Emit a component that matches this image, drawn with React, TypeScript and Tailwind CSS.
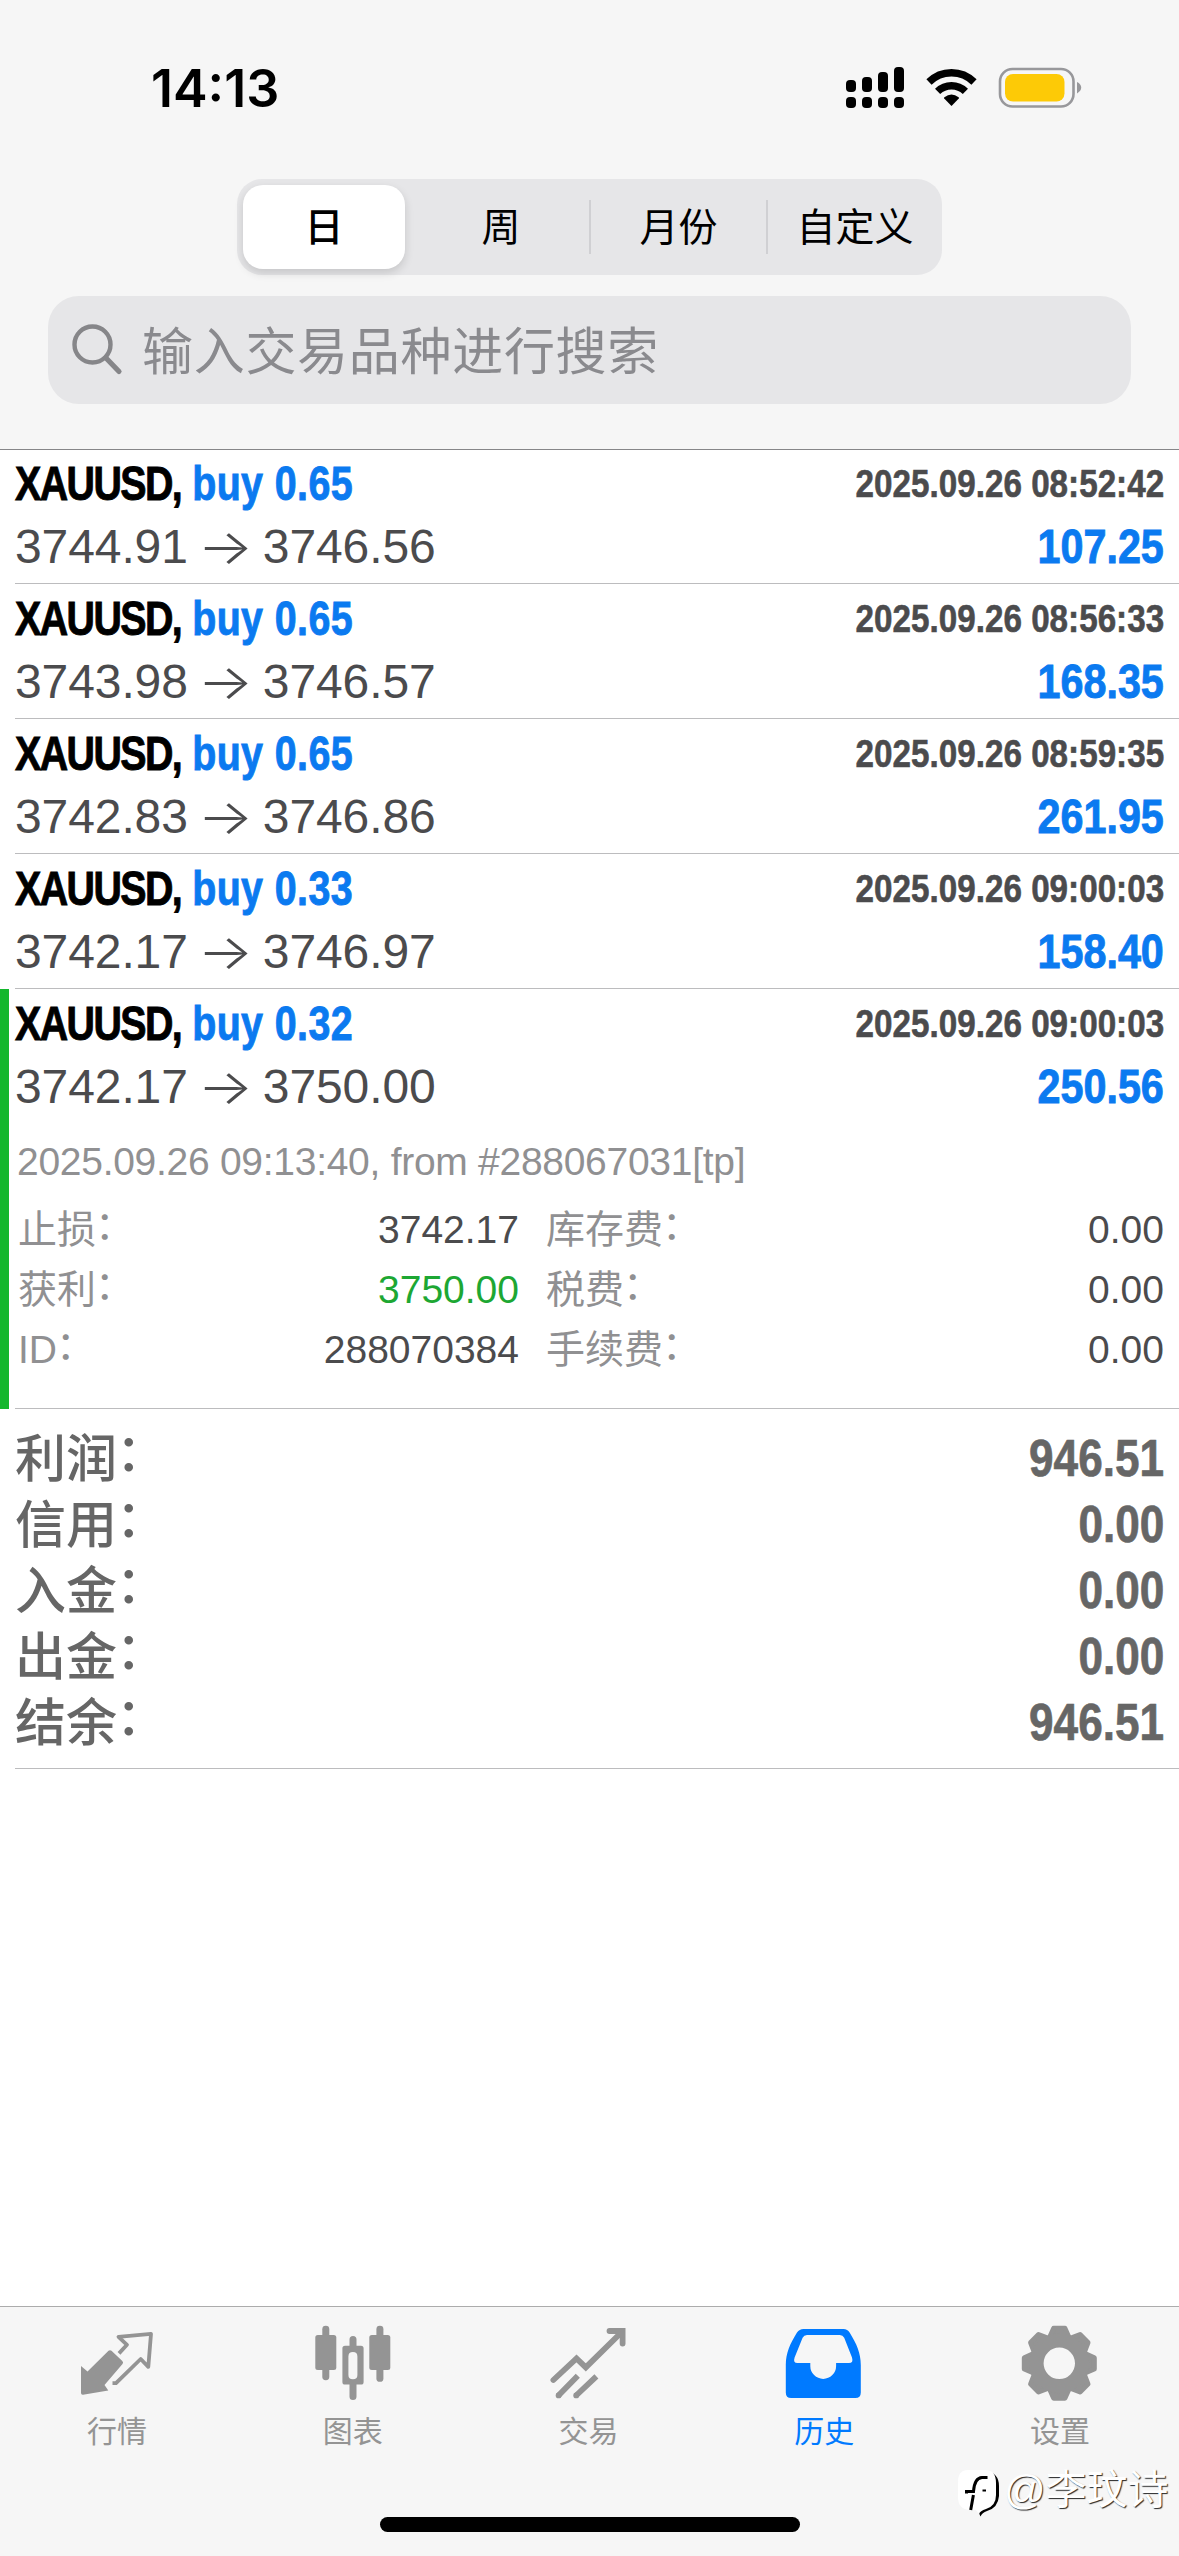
import type { ReactNode } from 'react';
import clsx from 'clsx';

type Deal = {
	symbol: string;
	volume: string;
	open: string;
	close: string;
	time: string;
	profit: string;
};

const deals: Deal[] = [
	{ symbol: 'XAUUSD', volume: '0.65', open: '3744.91', close: '3746.56', time: '2025.09.26 08:52:42', profit: '107.25' },
	{ symbol: 'XAUUSD', volume: '0.65', open: '3743.98', close: '3746.57', time: '2025.09.26 08:56:33', profit: '168.35' },
	{ symbol: 'XAUUSD', volume: '0.65', open: '3742.83', close: '3746.86', time: '2025.09.26 08:59:35', profit: '261.95' },
	{ symbol: 'XAUUSD', volume: '0.33', open: '3742.17', close: '3746.97', time: '2025.09.26 09:00:03', profit: '158.40' },
];

const expandedDeal: Deal = {
	symbol: 'XAUUSD',
	volume: '0.32',
	open: '3742.17',
	close: '3750.00',
	time: '2025.09.26 09:00:03',
	profit: '250.56',
};

const details = [
	{ label: '止损', value: '3742.17', label2: '库存费', value2: '0.00' },
	{ label: '获利', value: '3750.00', label2: '税费', value2: '0.00', green: true },
	{ label: 'ID', value: '288070384', label2: '手续费', value2: '0.00' },
];

const totals = [
	{ label: '利润', value: '946.51' },
	{ label: '信用', value: '0.00' },
	{ label: '入金', value: '0.00' },
	{ label: '出金', value: '0.00' },
	{ label: '结余', value: '946.51' },
];

function StatusBar() {
	return (
		<div className="flex h-[179px] items-start justify-between pl-[151px] pr-[97px] pt-[57px]">
			<span className="font-['Inter',sans-serif] text-[52px] font-semibold leading-[63px] text-black">
				14:13
			</span>
			<svg className="mt-[4px] h-[56px] w-[240px]" viewBox="842 61 240 56">
				<g fill="#000">
					<rect x="846" y="80" width="10" height="12" rx="4" />
					<rect x="862" y="77" width="10" height="15" rx="4" />
					<rect x="878" y="72" width="10" height="20" rx="4" />
					<rect x="894" y="67" width="10" height="25" rx="4" />
					<rect x="846" y="97" width="10" height="11" rx="4" />
					<rect x="862" y="97" width="10" height="11" rx="4" />
					<rect x="878" y="97" width="10" height="11" rx="4" />
					<rect x="894" y="97" width="10" height="11" rx="4" />
					<path d="M951.5 106 L944.2 98.6 Q943.6 97.8 944.4 97.2 Q951.5 92 958.6 97.2 Q959.4 97.8 958.8 98.6 Z" />
				</g>
				<g fill="none" stroke="#000" strokeWidth="7.4">
					<path d="M929 82 C941.5 69.6 961.5 69.6 974 82" />
					<path d="M937.6 91.4 C945.4 83.8 957.6 83.8 965.4 91.4" />
				</g>
				<rect x="1000" y="69" width="73.5" height="37.5" rx="12.5" fill="none" stroke="#98989b" strokeWidth="2.6" />
				<rect x="1005" y="74" width="59.5" height="27.5" rx="8" fill="#fdca06" />
				<path d="M1077 82 Q1081.2 84 1081.2 87.6 Q1081.2 91.2 1077 93.4 Z" fill="#98989b" />
			</svg>
		</div>
	);
}

function PeriodTabs() {
	return (
		<div className="mx-auto flex h-[96px] w-[705px] items-center rounded-[25px] bg-[#e6e6e8] text-[39px] leading-[60px] text-black">
			<div className="ml-[6px] flex h-[84px] w-[162px] items-center justify-center rounded-[20px] bg-white pt-[2px] font-medium shadow-[0_4px_10px_rgba(0,0,0,0.14)]">
				日
			</div>
			<div className="flex h-[54px] flex-1 items-center justify-center pl-[8px] pt-[2px]">周</div>
			<div className="flex h-[54px] w-[177px] items-center justify-center border-l-2 border-[#d0d0d3] pt-[2px]">月份</div>
			<div className="flex h-[54px] w-[176px] items-center justify-center border-l-2 border-[#d0d0d3] pt-[2px]">自定义</div>
		</div>
	);
}

function SearchField() {
	return (
		<div className="mx-[48px] mt-[21px] flex h-[108px] items-center rounded-[31px] bg-[#e6e6e8] pl-[23px]">
			<svg className="h-[54px] w-[54px]" viewBox="0 0 54 54" fill="none" stroke="#868689" strokeLinecap="round">
				<circle cx="21.5" cy="21.5" r="18" strokeWidth="4.4" />
				<path d="M35 35 L48 48.5" strokeWidth="5.2" />
			</svg>
			<span className="ml-[17px] pt-[5px] text-[51px] leading-[70px] tracking-[0.7px] text-[#8a8a8e]">
				输入交易品种进行搜索
			</span>
		</div>
	);
}

function DealSummary({ deal }: { deal: Deal }) {
	return (
		<>
			<div className="flex h-[63px] justify-between font-bold leading-[63px]">
				<span className="origin-left scale-x-[0.82] text-[48px] text-black [-webkit-text-stroke:0.9px]">
					<span className="tracking-[-1.9px]">{deal.symbol},</span>{' '}
					<span className="tracking-[0.5px] text-[#0b7af0]">buy {deal.volume}</span>
				</span>
				<span className="origin-right scale-x-[0.852] text-[39px] text-[#4b4b4d] [-webkit-text-stroke:0.6px]">
					{deal.time}
				</span>
			</div>
			<div className="flex h-[63px] justify-between leading-[63px]">
				<span className="flex text-[48px] tracking-[-0.1px] text-[#4b4b4d]">
					{deal.open}
					<span className="w-[75px] scale-x-[1.22] text-center font-['Inter',sans-serif] font-light">→</span>
					{deal.close}
				</span>
				<span className="origin-right scale-x-[0.86] text-[48px] font-bold text-[#0b7af0] [-webkit-text-stroke:0.9px]">
					{deal.profit}
				</span>
			</div>
		</>
	);
}

function DealRow({ deal }: { deal: Deal }) {
	return (
		<div className="ml-[15px] h-[135px] border-b border-[#bcbcbe] pr-[15px] pt-[3px]">
			<DealSummary deal={deal} />
		</div>
	);
}

function Label({ text }: { text: string }) {
	return (
		<>
			{text}
			<span className="relative -left-px -top-[0.11em]">：</span>
		</>
	);
}

function ExpandedRow() {
	return (
		<div className="flex h-[420px]">
			<div className="mr-[6px] w-[9px] bg-[#14b72d]" />
			<div className="flex-1 border-b border-[#bcbcbe] pr-[15px] pt-[3px]">
				<DealSummary deal={expandedDeal} />
				<p className="mt-[14px] pl-[2px] text-[39px] leading-[60px] tracking-[-0.28px] text-[#909092]">
					2025.09.26 09:13:40, from #288067031[tp]
				</p>
				<div className="mt-[8px] text-[39px] leading-[60px]">
					{details.map((row) => (
						<div key={row.label} className="flex">
							<span className="w-[200px] pl-[3px] text-[#909092]">
								<Label text={row.label} />
							</span>
							<span className={clsx('w-[304px] text-right', row.green ? 'text-[#1da733]' : 'text-[#4b4b4d]')}>
								{row.value}
							</span>
							<span className="flex-1 pl-[27px] text-[#909092]">
								<Label text={row.label2} />
							</span>
							<span className="text-[#4b4b4d]">{row.value2}</span>
						</div>
					))}
				</div>
			</div>
		</div>
	);
}

function Totals() {
	return (
		<div className="ml-[15px] h-[360px] border-b border-[#bcbcbe] pr-[15px] pt-[17px] text-[51px] leading-[66px] text-[#666]">
			{totals.map((row) => (
				<div key={row.label} className="flex justify-between">
					<span className="pt-px font-medium leading-[65px]">
						<Label text={row.label} />
					</span>
					<span className="origin-right scale-x-[0.865] font-bold [-webkit-text-stroke:0.7px]">{row.value}</span>
				</div>
			))}
		</div>
	);
}

function QuotesIcon() {
	return (
		<>
			<path
				d="M3 44 L9.5 49.5 L30.5 28.8 Q32 27.5 33.5 28.8 L44.3 39 Q45.8 40.6 44.5 42 L26.5 63 L30.3 68.4 L5 72.8 Q3 73 3 71 Z"
				fill="currentColor"
			/>
			<path
				d="M41 31.4 L49 22.8 L40.5 14.8 L73 11.8 L70.3 44.8 L62.7 37 L38 61.2 H34.5"
				fill="none"
				stroke="currentColor"
				strokeWidth="3.8"
				strokeLinejoin="round"
			/>
		</>
	);
}

function ChartIcon() {
	return (
		<g fill="currentColor">
			<rect x="1.3" y="13" width="21" height="35" rx="2.5" />
			<rect x="8.3" y="3.8" width="7" height="54.4" rx="3.4" />
			<path
				fillRule="evenodd"
				d="M31 23.7 H47 Q49.6 23.7 49.6 26.3 V60 Q49.6 62.6 47 62.6 H31 Q28.4 62.6 28.4 60 V26.3 Q28.4 23.7 31 23.7 Z M38.9 30 Q34.4 30 34.4 34.4 V53 Q34.4 57.3 38.9 57.3 Q43.4 57.3 43.4 53 V34.4 Q43.4 30 38.9 30 Z"
			/>
			<path d="M35.5 26 V17.5 Q35.5 14 39 14 Q42.5 14 42.5 17.5 V26 Z M35.5 60 V74.5 Q35.5 78 39 78 Q42.5 78 42.5 74.5 V60 Z" />
			<rect x="55.3" y="13" width="21" height="35" rx="2.5" />
			<rect x="62.4" y="3.8" width="7" height="56" rx="3.4" />
		</g>
	);
}

function TradeIcon() {
	return (
		<g fill="none" stroke="currentColor" strokeWidth="5.8">
			<path d="M4.4 58 L27.5 36.4 L36.8 45.4 L72 10.7" strokeLinecap="round" />
			<path d="M60.5 9 H73.6 V21.6" strokeLinecap="round" />
			<path d="M28.8 53.7 L9 74 M47.4 54.3 L26.6 74" />
			<g fill="currentColor" stroke="none">
				<circle cx="9.6" cy="73.4" r="2.9" />
				<circle cx="27.2" cy="73.4" r="2.9" />
			</g>
		</g>
	);
}

function HistoryIcon() {
	return (
		<path
			fill="currentColor"
			fillRule="evenodd"
			d="M18.5 7 H58.5 Q62.5 7 64.6 10.6 C71.6 22 75.8 31 75.8 43 V70.5 Q75.8 76 70.3 76 H6.2 Q.8 76 .8 70.5 V43 C.8 31 5 22 12 10.6 Q14.4 7 18.5 7 Z M22 13 Q19 13 17.6 15.8 L9.6 35.5 Q7.8 41 12.5 41 H25.3 V44 A12.9 12.9 0 0 0 51.1 44 V41 H64 Q68.6 41 67 35.5 L59.2 15.8 Q57.8 13 54.8 13 Z"
		/>
	);
}

function SettingsIcon() {
	return (
		<g transform="translate(38.3 41.3)">
			<g fill="currentColor" stroke="currentColor" strokeWidth="5" strokeLinejoin="round">
				{[0, 45, 90, 135, 180, 225, 270, 315].map((angle) => (
					<path key={angle} transform={`rotate(${angle})`} d="M-5.6 -35 H5.6 L10.5 -24 H-10.5 Z" />
				))}
			</g>
			<circle r="22.8" fill="none" stroke="currentColor" strokeWidth="14.2" />
		</g>
	);
}

function TabItem({ label, active, children }: { label: string; active?: boolean; children: ReactNode }) {
	return (
		<div className={clsx('flex flex-1 flex-col items-center pt-[15px]', active ? 'text-[#007aff]' : 'text-[#949494]')}>
			<svg className="h-[80px] w-[80px]" viewBox="0 0 80 80">
				{children}
			</svg>
			<span className="mt-[10px] pr-[2px] text-[30px] leading-[40px]">{label}</span>
		</div>
	);
}

function TabBar() {
	return (
		<div className="flex h-[250px] flex-col border-t border-[#acacac] bg-[#f6f6f6]">
			<div className="flex h-[210px]">
				<TabItem label="行情">
					<QuotesIcon />
				</TabItem>
				<TabItem label="图表">
					<ChartIcon />
				</TabItem>
				<TabItem label="交易">
					<TradeIcon />
				</TabItem>
				<TabItem label="历史" active>
					<HistoryIcon />
				</TabItem>
				<TabItem label="设置">
					<SettingsIcon />
				</TabItem>
			</div>
			<div className="mx-auto h-[15px] w-[420px] rounded-full bg-black" />
		</div>
	);
}

function AuthorTag() {
	return (
		<div className="absolute left-[956px] top-[2462px] flex items-center">
			<svg className="h-[58px] w-[46px]" viewBox="0 0 46 58">
				<path d="M30 9 Q43 11 43 24 V34 Q42 46 31 49 Q26 50.5 24.5 54.5 L22.5 50 L30 30 Z" fill="#000" />
				<path d="M12 8 H29 Q40 8 40 21 V33 Q40 44 30 47 Q24 49 23 52 L20 48 H14 Q2 47.5 2 35 V20 Q2 8 12 8 Z" fill="#fff" />
				<path
					d="M14.7 48 L17.4 33 M10.5 31.6 V29.5 H17.5 Q18.5 16 26 15.6 H31.5"
					fill="none"
					stroke="#000"
					strokeWidth="3"
				/>
				<path d="M26.5 28.5 H30" stroke="#000" strokeWidth="2" />
			</svg>
			<span className="-mt-[3px] ml-[2px] text-[41px] leading-[58px] text-white [text-shadow:1px_1px_1px_rgba(0,0,0,0.85)]">
				@李玟诗
			</span>
		</div>
	);
}

export default function App() {
	return (
		<div className="relative flex h-[2556px] w-[1179px] flex-col overflow-hidden bg-white font-['Liberation_Sans','Noto_Sans_CJK_SC',sans-serif]">
			<header className="h-[450px] border-b border-[#868688] bg-[#f6f6f6]">
				<StatusBar />
				<PeriodTabs />
				<SearchField />
			</header>
			<main className="-mt-px flex-1">
				{deals.map((deal) => (
					<DealRow key={deal.time + deal.profit} deal={deal} />
				))}
				<ExpandedRow />
				<Totals />
			</main>
			<TabBar />
			<AuthorTag />
		</div>
	);
}
